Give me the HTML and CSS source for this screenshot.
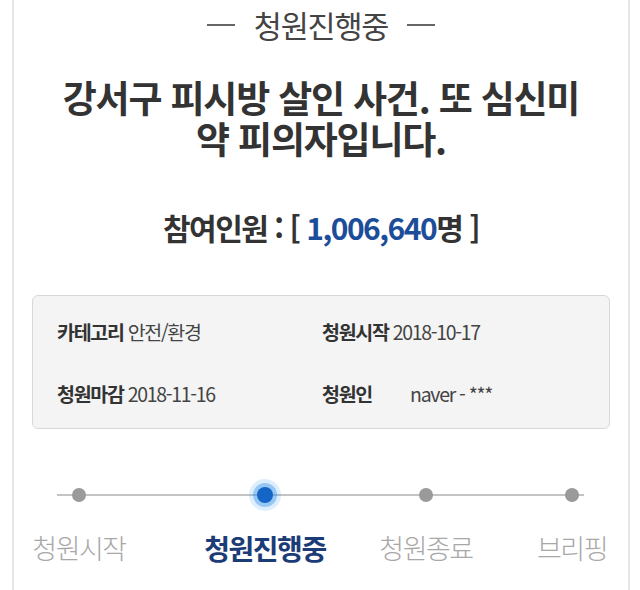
FILE: index.html
```html
<!DOCTYPE html>
<html lang="ko">
<head>
<meta charset="utf-8">
<title>청원진행중</title>
<link rel="stylesheet" href="styles.css">
</head>
<body>
<div class="frame">
  <div class="status"><span class="dash"></span><span class="status-text">청원진행중</span><span class="dash"></span></div>
  <h1 class="title">강서구 피시방 살인 사건. 또 심신미<br>약 피의자입니다.</h1>
  <div class="count">참여인원 : [ <span class="num">1,006,640</span>명 ]</div>
  <div class="info">
    <div class="row">
      <div class="cell"><b>카테고리</b> 안전/환경</div>
      <div class="cell"><b>청원시작</b> 2018-10-17</div>
    </div>
    <div class="row">
      <div class="cell"><b>청원마감</b> 2018-11-16</div>
      <div class="cell"><b>청원인</b> <span class="writer">naver - ***</span></div>
    </div>
  </div>
  <div class="steps">
    <div class="track"></div>
    <div class="step s1"><span class="dot"></span><span class="label">청원시작</span></div>
    <div class="step s2 active"><span class="dot"></span><span class="label">청원진행중</span></div>
    <div class="step s3"><span class="dot"></span><span class="label">청원종료</span></div>
    <div class="step s4"><span class="dot"></span><span class="label">브리핑</span></div>
  </div>
</div>
</body>
</html>
```
FILE: styles.css
```css
html, body {
  margin: 0;
  padding: 0;
  background: #fff;
}
body {
  font-family: "Noto Sans CJK KR", "Noto Sans", sans-serif;
  color: #333;
}
.frame {
  margin-left: 12px;
  width: 618px;
  height: 590px;
  border-left: 2px solid #e6e6e6;
  border-right: 2px solid #e6e6e6;
  padding: 0 18px;
  box-sizing: border-box;
}
.status {
  height: 50px;
  display: flex;
  align-items: center;
  justify-content: center;
  gap: 19px;
}
.status-text {
  font-size: 30.5px;
  line-height: 50px;
  color: #444;
  letter-spacing: -1.2px;
}
.dash {
  display: inline-block;
  width: 28px;
  height: 2px;
  background: #666;
}
.title {
  margin: 27px 0 0;
  text-align: center;
  font-size: 37px;
  line-height: 41px;
  font-weight: 700;
  letter-spacing: -1.2px;
  color: #333;
}
.count {
  margin-top: 48px;
  text-align: center;
  font-size: 30px;
  line-height: 40px;
  font-weight: 700;
  letter-spacing: -1.5px;
  color: #333;
}
.num {
  color: #1b4d99;
}
.info {
  margin-top: 48px;
  height: 134px;
  box-sizing: border-box;
  background: #f4f4f4;
  border: 1px solid #d8d8d8;
  border-radius: 6px;
  padding: 21px 24px 0;
  display: flex;
  flex-direction: column;
  gap: 32px;
}
.row {
  display: flex;
  line-height: 30px;
  font-size: 19.5px;
  letter-spacing: -1.3px;
  color: #444;
}
.cell {
  flex: 0 0 265px;
}
.cell b {
  font-weight: 700;
  color: #333;
}
.writer {
  margin-left: 34px;
}
.steps {
  position: relative;
  margin-top: 51px;
  display: grid;
  grid-template-columns: 94px 69px 140px 41px 100px 58px 76px;
}
.track {
  position: absolute;
  left: 25px;
  right: 26px;
  top: 14px;
  height: 2px;
  background: #c4c4c4;
}
.step {
  position: relative;
  display: flex;
  flex-direction: column;
  align-items: center;
  grid-row: 1;
}
.s1 { grid-column: 1; }
.s2 { grid-column: 3; }
.s3 { grid-column: 5; }
.s4 { grid-column: 7; }
.dot {
  display: block;
  margin-top: 8px;
  width: 14px;
  height: 14px;
  border-radius: 50%;
  background: #9a9a9a;
}
.active .dot {
  background: #1565c6;
  width: 16px;
  height: 16px;
  margin-top: 7px;
  box-shadow: 0 0 0 4px rgba(40, 140, 235, 0.4), 0 0 0 8px rgba(40, 140, 235, 0.15);
}
.label {
  white-space: nowrap;
  margin-top: 29px;
  font-size: 27px;
  line-height: 34px;
  letter-spacing: -1.5px;
  color: #a8a8a8;
  font-weight: 300;
}
.active .label {
  color: #1c3c78;
  font-weight: 700;
  font-size: 28px;
}
.active .dot + .label {
  margin-top: 28px;
}
```
